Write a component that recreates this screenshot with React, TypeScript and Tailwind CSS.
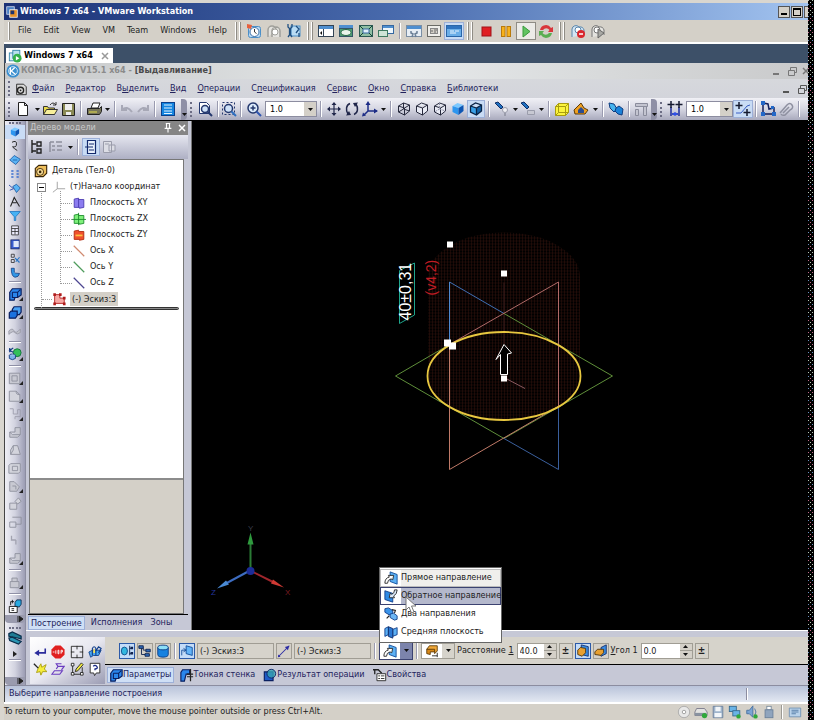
import type { ReactNode } from "react";
import { clsx } from "clsx";

const cubePath = "M2.5 5l5-3 6 2v6l-5 4-6-3z M2.5 5l6 2 5-3 M8.5 7v7";

// every glyph is drawn on a 16x16 grid
const icons: Record<string, ReactNode> = {
  // VMware
  vmware: (
    <>
      <rect x="1" y="1" width="10" height="10" fill="#4a7fc4" stroke="#dfe6f5" />
      <rect x="5" y="5" width="10" height="10" fill="#e8922a" stroke="#fff" />
      <rect x="6" y="6" width="5" height="5" fill="#1d3470" />
    </>
  ),
  vmTab: (
    <>
      <rect x="1.5" y="4.5" width="8" height="9" fill="#d8ecf8" stroke="#2d82a8" />
      <rect x="5.5" y="1.5" width="8" height="9" fill="#b9e0ee" stroke="#2d82a8" />
      <circle cx="10.5" cy="10.5" r="5" fill="#35b04a" />
      <path d="M9 8l4 2.5L9 13z" fill="#fff" />
    </>
  ),
  snapshot: (
    <>
      <rect x="2.5" y="3.5" width="12" height="11" rx="2" fill="#b8d8f2" stroke="#4b8fc8" />
      <circle cx="8.5" cy="9" r="4.5" fill="#fff" stroke="#3b6fa6" />
      <path d="M8.5 6v3l2 1.5" stroke="#333" fill="none" />
      <path d="M1 1l5 1-1 4-4-1z" fill="#e8603c" />
    </>
  ),
  revert: (
    <>
      <path d="M2 14V7a4 4 0 018 0M6 14V8a4 4 0 018 0v6" stroke="#9f9f9a" fill="#e4e3df" strokeWidth="1.5" />
      <circle cx="9" cy="9" r="3" fill="#fff" stroke="#9f9f9a" />
    </>
  ),
  manage: (
    <>
      <rect x="5" y="3" width="9" height="10" fill="#b8dcf4" stroke="#4b8fc8" />
      <path d="M2 1v3l1.500 1.500V12L2 14M6 1v3L4.500 5.500V12L6 14M10 3l3 3-3 4M13 10v4" stroke="#1f4f80" fill="none" strokeWidth="1.300" />
    </>
  ),
  sidebar: (
    <>
      <rect x=".5" y="2.500" width="15" height="11" fill="#fff" stroke="#345" />
      <path d="M1 3h14v3H1z" fill="#4f8fd0" />
      <path d="M5.500 6v8" stroke="#345" />
      <path d="M4 8v4L2 10z" fill="#111" />
    </>
  ),
  switchView: (
    <>
      <rect x="1" y="2" width="14" height="3" fill="#4f8fd0" />
      <rect x="1.500" y="5.500" width="13" height="8" fill="#4d9a72" stroke="#356" />
      <ellipse cx="8" cy="9.500" rx="5" ry="3" fill="#e9f5ea" stroke="#2a6a48" />
    </>
  ),
  fullScreen: (
    <>
      <rect x="1.500" y="2.500" width="13" height="11" fill="#8fbfa4" stroke="#2b5a54" />
      <rect x="5" y="6" width="6" height="4" fill="#dff0fa" stroke="#3668a0" />
      <path d="M2 3l3 3M14 3l-3 3M2 13l3-3M14 13l-3-3" stroke="#143" />
    </>
  ),
  unity: (
    <>
      <rect x="4.500" y="2.500" width="11" height="8" fill="#eef6fb" stroke="#3668a0" />
      <path d="M5 3h10v2H5z" fill="#4f8fd0" />
      <rect x=".5" y="7.500" width="9" height="6" fill="#cfe4d6" stroke="#3f7a60" />
    </>
  ),
  appliance: (
    <>
      <rect x=".5" y="2.500" width="15" height="11" fill="#e7eef5" stroke="#7a8ea4" />
      <path d="M1 3h14v3H1z" fill="#4f8fd0" />
      <path d="M5 8v2l2 1-1 3M11 8v2L9 11l1 3" stroke="#6a7f96" fill="none" strokeWidth="1.500" />
    </>
  ),
  summary: (
    <>
      <rect x="1.500" y="2.500" width="13" height="11" fill="#efeeea" stroke="#6b6b66" />
      <rect x="4.500" y="5.500" width="7" height="5" fill="#d4d0c8" stroke="#888" />
      <path d="M6 7v2M8 7h3M8 9h2" stroke="#666" />
    </>
  ),
  console: (
    <>
      <rect x=".5" y="2.500" width="15" height="11" fill="#6aaee8" stroke="#2a66a8" />
      <path d="M1 3h14v3H1z" fill="#2f74c0" />
      <path d="M4 8h4M9 8h4M4 10h6" stroke="#e9f5ff" />
    </>
  ),
  powerOff: <rect x="4" y="4" width="9" height="9" fill="#e01f24" stroke="#a01318" />,
  suspend: (
    <>
      <rect x="3.500" y="3.500" width="3.500" height="10" fill="#f7b21c" stroke="#b97a0c" />
      <rect x="9" y="3.500" width="3.500" height="10" fill="#f7b21c" stroke="#b97a0c" />
    </>
  ),
  powerOn: <path d="M5 3l7 5.500L5 14z" fill="#62c462" stroke="#3a9a3c" />,
  reset: (
    <>
      <path d="M2 7a6 6 0 0111-2l2-1v5h-5l1.500-2A4 4 0 005 7z" fill="#d9363a" />
      <path d="M14 10a6 6 0 01-11 2l-2 1V8h5l-1.500 2A4 4 0 0011 10z" fill="#5aae52" />
    </>
  ),
  snapStop: (
    <>
      <path d="M2 14V6a4 4 0 017-2 4 4 0 015 3v5" fill="#d4e6f4" stroke="#5a86ac" />
      <circle cx="8" cy="7" r="3" fill="#fff" stroke="#5a86ac" />
      <circle cx="11" cy="11" r="4" fill="#d9262c" />
      <path d="M9 11h4" stroke="#fff" strokeWidth="1.500" />
    </>
  ),
  snapPlay: (
    <>
      <path d="M2 14V6a4 4 0 017-2 4 4 0 015 3v5" fill="#e4e3df" stroke="#777" />
      <circle cx="7" cy="7" r="3" fill="#fff" stroke="#777" />
      <path d="M8 6l6 4-6 5z" fill="#a8a8a4" stroke="#666" />
    </>
  ),
  disc: (
    <>
      <circle cx="8" cy="8" r="6.500" fill="#e8e8e8" stroke="#a8a8a8" />
      <circle cx="8" cy="8" r="2" fill="#fff" stroke="#999" />
    </>
  ),
  drive: (
    <>
      <path d="M3 4h9l3 4v4H1V8z" fill="#e2e2e0" stroke="#778" />
      <path d="M1 9h13v3H1z" fill="#8892a0" />
      <circle cx="12" cy="12" r="3" fill="#2fa83a" />
    </>
  ),
  floppy: (
    <>
      <path d="M2.500 1.500h11v13h-11z" fill="#9fb4cc" stroke="#6a7f9a" />
      <path d="M5 2h6v5H5zM4 9h8v5H4z" fill="#f2f5f8" />
    </>
  ),
  network: (
    <>
      <rect x="1.500" y="1.500" width="8" height="6" fill="#69b3e6" stroke="#34688f" />
      <rect x="5.500" y="6.500" width="8" height="6" fill="#69b3e6" stroke="#34688f" />
      <circle cx="12" cy="13" r="2.500" fill="#2fa83a" />
    </>
  ),
  sound: (
    <>
      <path d="M2 6h3l4-5v13l-4-4H2z" fill="#7aa4d4" stroke="#466f9f" />
      <path d="M11 4q3 4 0 8" stroke="#466f9f" fill="none" />
      <circle cx="12" cy="13" r="2.500" fill="#2fa83a" />
    </>
  ),
  usb: (
    <>
      <rect x="5.500" y="1.500" width="5" height="4" fill="#fff" stroke="#789" />
      <rect x="3.500" y="5.500" width="9" height="9" fill="#8fa4bd" stroke="#6a7f9a" />
    </>
  ),
  log: (
    <>
      <path d="M1.500 3.500h13v10h-13z" fill="#b9d2ea" stroke="#6f90b2" />
      <path d="M4 6h8M4 8h8M4 10h5" stroke="#4f77a4" />
    </>
  ),

  // Kompas
  kompas: (
    <>
      <circle cx="8" cy="8" r="7.500" fill="#3b8fcf" />
      <circle cx="8" cy="8" r="5" fill="none" stroke="#d8ecf8" />
      <path d="M5 4v8M10 4L6 8l5 4" stroke="#fff" fill="none" strokeWidth="1.500" />
    </>
  ),
  partDoc: (
    <>
      <path d="M3 2.500h8l3 3v9H3z" fill="#d8d8d8" stroke="#222" />
      <circle cx="7.500" cy="9.500" r="3.500" fill="none" stroke="#222" strokeWidth="1.500" />
      <circle cx="7.500" cy="9.500" r="1" fill="#222" />
    </>
  ),
  new: <path d="M3.500 1.500h6l3 3v10h-9z M9.500 1.500v3h3" fill="#fff" stroke="#222" />,
  open: (
    <>
      <path d="M1.500 13.500v-8h4l1 1.500h6v6.500z" fill="#e8d84a" stroke="#333" />
      <path d="M1.500 13.500l3-5h11l-3 5z" fill="#f7ef9a" stroke="#333" />
      <path d="M8 4q3-4 6 0M14 1v3h-3" stroke="#333" fill="none" />
    </>
  ),
  save: (
    <>
      <path d="M2.500 2.500h12v12h-12z" fill="#8a8a55" stroke="#222" />
      <path d="M5 3h7v6H5zM6 11h5v3H6z" fill="#eee" />
    </>
  ),
  print: (
    <>
      <path d="M5 7l2-5h7l-2 5z" fill="#fff" stroke="#222" />
      <path d="M1.500 7.500h12l2-2v5l-2 3h-12z" fill="#77755a" stroke="#222" />
      <path d="M3 11h8" stroke="#e7e04a" />
    </>
  ),
  undo: <path d="M3 4v5h5M3 9q5-5 10 2" fill="none" stroke="#a7a8b6" strokeWidth="2" />,
  redo: <path d="M13 4v5H8M13 9Q8 4 3 11" fill="none" stroke="#a7a8b6" strokeWidth="2" />,
  manager: (
    <>
      <rect x="1.500" y="1.500" width="13" height="13" fill="#1686e0" stroke="#0a3f8c" />
      <path d="M4 4h8M4 7h8M4 10h8M4 12.500h8" stroke="#e2f3ff" />
    </>
  ),
  zoomPage: (
    <>
      <path d="M2.500 1.500h7l3 3v8h-10z" fill="#fff" stroke="#24386e" />
      <circle cx="8" cy="8" r="3.500" fill="#cfe2f8" stroke="#24386e" strokeWidth="1.500" />
      <path d="M10.500 10.500L15 15" stroke="#24386e" strokeWidth="2" />
    </>
  ),
  zoomWindow: (
    <>
      <path d="M1.500 1.500h12v12h-12z" fill="none" stroke="#24386e" strokeDasharray="2 2" />
      <circle cx="7.500" cy="7.500" r="4" fill="#cfe2f8" stroke="#24386e" strokeWidth="1.500" />
      <path d="M10.500 10.500L15 15" stroke="#2f6fc0" strokeWidth="2" />
    </>
  ),
  zoomIn: (
    <>
      <circle cx="7" cy="7" r="5" fill="#dcebfb" stroke="#24386e" strokeWidth="1.500" />
      <path d="M4.500 7h5M7 4.500v5" stroke="#24386e" strokeWidth="1.500" />
      <path d="M10.500 10.500L15 15" stroke="#2f56b0" strokeWidth="2" />
    </>
  ),
  pan: (
    <>
      <path d="M8 2v12M2 8h12" stroke="#20264a" strokeWidth="1.200" />
      <path d="M8 1l2.500 3h-5zM8 15l2.500-3h-5zM1 8l3-2.500v5zM15 8l-3-2.500v5z" fill="#20264a" />
    </>
  ),
  rotate: (
    <>
      <path d="M6 2.500C2 4 1.500 9 4 13M10 13.500C14 12 14.500 7 12 3" fill="none" stroke="#20264a" strokeWidth="1.500" />
      <path d="M2 14.500l5-.500-2-4zM14 1.500L9 2l2 4z" fill="#20264a" />
    </>
  ),
  orient: (
    <>
      <path d="M6 2v8h9M6 10l-4 4" fill="none" stroke="#1c2c86" strokeWidth="1.500" />
      <path d="M6 0l2.500 4h-5zM16 10l-4-2.500v5zM0 15.500l1-4 3 3z" fill="#1c2c86" />
    </>
  ),
  wire: (
    <>
      <path d={cubePath} fill="none" stroke="#26293c" />
      <path d="M7.500 2v6l-5 3M7.500 8l6 2" stroke="#26293c" fill="none" />
    </>
  ),
  hidden: <path d={cubePath} fill="#e9ebf5" stroke="#26293c" />,
  hiddenThin: (
    <>
      <path d={cubePath} fill="#e9ebf5" stroke="#26293c" />
      <path d="M7.500 2v6l-5 3M7.500 8l6 2" stroke="#8d90a6" fill="none" strokeDasharray="2 1" />
    </>
  ),
  shaded: (
    <>
      <path d="M2.500 5l5-3 6 2-5 3z" fill="#7cc8ff" />
      <path d="M2.500 5l6 2v7l-6-3z" fill="#2d96f0" />
      <path d="M8.500 7l5-3v6l-5 4z" fill="#0d56b4" />
    </>
  ),
  shadedEdges: (
    <>
      <path d="M2.500 5l6 2v7l-6-3z" fill="#39a0e8" />
      <path d="M8.500 7l5-3v6l-5 4z" fill="#1262a8" />
      <path d={cubePath} fill="none" stroke="#0a2346" strokeWidth="1.300" />
    </>
  ),
  section: (
    <>
      <path d="M1 2l3-1 5 5-2 2z" fill="#1f6fc0" stroke="#0e2d66" />
      <circle cx="11" cy="9" r="2.500" fill="#f0f0f4" stroke="#9a9cab" />
      <path d="M11 12v3" stroke="#9a9cab" strokeWidth="2" />
    </>
  ),
  brush: (
    <>
      <path d="M1 2l3-1 5 5-2 2z" fill="#1f6fc0" stroke="#0e2d66" />
      <path d="M7.500 9.500h7v4h-7z" fill="#c7c8d2" stroke="#9a9cab" />
    </>
  ),
  yellowCube: (
    <>
      <path d="M1.500 5.500l3-3h10v9l-3 3h-10z" fill="#fbf43c" stroke="#a89c10" />
      <path d="M1.500 5.500h10v9M11.500 5.500l3-3M4.500 2.500v9h10M4.500 11.500l-3 3" fill="none" stroke="#a89c10" />
    </>
  ),
  house: (
    <>
      <path d="M1 9l7-7 3 5 4 2-3 4H2z" fill="#f0a020" stroke="#5c3a08" />
      <path d="M5 9l3-3 3 3v3H5z" fill="#2b4c90" />
    </>
  ),
  butterfly: (
    <>
      <path d="M1 2l5 1 3 5-3 3-4-4z" fill="#46b4ee" stroke="#0f3c80" />
      <path d="M8 7l3-2 4 3-1 6-4-1-3-3z" fill="#1b82d8" stroke="#0f3c80" />
    </>
  ),
  panelGrey: <path d="M2.500 2.500h12v3h-12zM2.500 8.500h3v6h-3zM10.500 5.500h3v9h-3z" fill="#c3c4d0" stroke="#8a8c9c" />,
  snapPoints: (
    <>
      <path d="M4 6v9M12 6v9M5 13h6" stroke="#1c2c9c" fill="none" strokeWidth="1.500" />
      <path d="M4 0v7M.5 3.500h7M12 0v7M8.500 3.500h7" stroke="#151a30" strokeWidth="1.500" />
      <path d="M5 13l3-2v4zM11 13l-3-2v4z" fill="#2f50e8" />
    </>
  ),
  snaps: (
    <>
      <path d="M4 1v7M.5 4.500h7M12 8v7M8.500 11.500h7" stroke="#151a30" strokeWidth="1.500" />
      <path d="M1 12h5l6-7 3-1" stroke="#3a5fc4" fill="none" />
    </>
  ),
  localCs: (
    <>
      <path d="M3 2v11h11V7l-5 1-1-5z" fill="none" stroke="#13205c" strokeWidth="1.500" />
      <path d="M1 0h4v4H1zM1 11h4v4H1zM12 11h4v4h-4zM11 5h3v3h-3z" fill="#2368c8" />
    </>
  ),
  clip: <path d="M2 12L9 4q3-3 5 0t-2 5l-5 5q-3 1-4-1M5 12l6-6" fill="none" stroke="#8e90a0" strokeWidth="1.500" />,

  // left strip
  sketch: <path d="M4 3q6-3 6 2t-4 4 5 5" fill="none" stroke="#222" strokeWidth="1.300" />,
  planeBlue: <path d="M1 8l6-6 8 5-6 7z M5 8l6 0" fill="#5bb4f4" stroke="#12509c" />,
  dots: <path d="M3 4h3M10 4h3M3 8h3M10 8h3M3 12h3M10 12h3" stroke="#3a6fd0" strokeWidth="2" />,
  surf: (
    <>
      <path d="M5 6l5-3 5 5-5 6z" fill="#5bb4f4" stroke="#12509c" />
      <path d="M0 4l6 5-5 2" fill="none" stroke="#12309c" />
    </>
  ),
  dim: <path d="M2 14L7 2l7 12M5 9h5" fill="none" stroke="#222" strokeWidth="1.400" />,
  filter: <path d="M1 2h14L9 9v5H7V9z" fill="#45b2f4" stroke="#1b70bc" />,
  sheet: <path d="M3.500 2.500h9v12h-9z M3.500 6h9M3.500 10h9M8 6v8" fill="#eef" stroke="#222" />,
  report: (
    <>
      <rect x="2.500" y="2.500" width="11" height="12" fill="#3a5fd0" stroke="#12205c" />
      <path d="M6 4h7v8H6z" fill="#dfe8fa" />
    </>
  ),
  measure: (
    <>
      <path d="M3 3h4v4H3zM3 10h4v4H3z" fill="none" stroke="#222" />
      <path d="M8 8l6 6M14 7l-5 6" stroke="#2b76c4" strokeWidth="1.500" />
    </>
  ),
  elbow: <path d="M3 3h4v5q0 2 7 2-1 5-6 5-5-1-5-12z" fill="#3296e4" stroke="#0e3880" />,
  extrude: (
    <>
      <path d="M2 6l3-4h10v7l-4 3H8l-1 3H2z" fill="#2a86ec" stroke="#0a1f60" strokeWidth="1.400" />
      <path d="M5 6h6l3-3M11 6v6M5 6v6h3" fill="none" stroke="#0a1f60" strokeWidth="1.200" />
    </>
  ),
  extrude2: (
    <>
      <path d="M5 5l2-3h8v6l-2 3H5z" fill="#4aa2f4" stroke="#0a1f60" strokeWidth="1.400" />
      <path d="M1.500 9l2-2h7v5l-2 3h-7z" fill="#1b72e0" stroke="#0a1f60" strokeWidth="1.400" />
    </>
  ),
  greyA: <path d="M1 9q4-4 6 0t7-2v4q-4 3-6 0t-7 2z" fill="#c2c3cc" stroke="#9899a6" />,
  greenGear: (
    <>
      <circle cx="10.500" cy="6.500" r="4.500" fill="#33c05a" stroke="#14703a" />
      <path d="M2 1v5M6 1L2 4l4 2" fill="none" stroke="#123a80" strokeWidth="1.400" />
      <ellipse cx="5" cy="9.500" rx="3.500" ry="1.500" fill="#cfe4f8" stroke="#123a80" />
      <path d="M1.500 9.500V13q3.500 3 7 0V9.500" fill="#7fb2e8" stroke="#123a80" />
    </>
  ),
  greyB: <path d="M1.500 2.500h12v12h-12z M4.500 5.500h6v6h-6z" fill="#c8c9d2" stroke="#8d8f9c" />,
  greyC: <path d="M1.500 14V2.500h8l4 4V14z M9.500 2.500q-1 4 4 4" fill="#d3d4dc" stroke="#8d8f9c" />,
  greyD: <path d="M2 2h4v6h5V3h3v8H8v3" fill="none" stroke="#9c9dab" />,
  greyE: <path d="M2 8h6V3h6v8l-3 3H2z M2 8l3 3h9" fill="#c8c9d2" stroke="#8d8f9c" />,
  greyF: <path d="M3 13V8l3-5h5l3 10z M6 3v5l-3 5" fill="#d3d4dc" stroke="#8d8f9c" />,
  greyG: <path d="M3 3h11v9l-2 2H1V5z M5 6h6v5H5z" fill="#d3d4dc" stroke="#8d8f9c" />,
  greyH: <path d="M2 3h5l6 6-3 5H2z M5 8h4v4" fill="#c8c9d2" stroke="#8d8f9c" />,
  greyI: <path d="M2 7h8v7H2z M8 5l4-4 3 4-4 3z" fill="#d3d4dc" stroke="#8d8f9c" />,
  greyJ: <path d="M2 8h7v6H2z M5 2.500h10v8h-6" fill="none" stroke="#8d8f9c" />,
  greyK: <path d="M4 3v5h5M9 8v5" fill="none" stroke="#a2a3b0" strokeWidth="1.500" />,
  lock: <path d="M2.500 7.500h10v7h-10z M4.500 7V3.500h6V7" fill="#c8c9d2" stroke="#8d8f9c" />,
  assembly: (
    <>
      <path d="M8 4l2-3h5v5l-2 3H8z" fill="#2aaae0" stroke="#0c2a50" />
      <path d="M1.500 8.500h9v7h-9zM4 11h3M4 13h3" fill="#fff" stroke="#111" />
      <path d="M3 7V3h4M5 1v4" fill="none" stroke="#111" />
    </>
  ),
  bolts: (
    <>
      <path d="M1 3l4-2 10 5v3L11 8 1 6z" fill="#1f7c94" stroke="#0b2f4c" strokeWidth="1.400" />
      <path d="M1 8l4-1 10 5-3 3L2 11z" fill="#2a96b4" stroke="#0b2f4c" strokeWidth="1.400" />
    </>
  ),

  // tree
  part: (
    <>
      <path d="M1.500 5l4-3.500h9v9l-4 4h-9z" fill="#eebf5c" stroke="#3a2608" strokeWidth="1.300" />
      <circle cx="7" cy="9" r="4" fill="#f8dd98" stroke="#3a2608" />
      <circle cx="7" cy="9" r="1.500" fill="#3a2608" />
    </>
  ),
  origin: <path d="M6 2v8h9M6 10l-5 4" stroke="#9a9a9a" fill="none" />,
  planeXY: <path d="M2.500 3.500l5-1v1.500h6v9l-5 1V13h-6z M7.500 3v10" fill="#8c7cf0" stroke="#4a3cb0" />,
  planeZX: (
    <>
      <path d="M2.500 3.500l5-1v1.500h6v9l-5 1V13h-6z" fill="#7ef07a" stroke="#1c8c2c" />
      <path d="M0 8.500h16M7.500 1v14" stroke="#1c8c2c" />
    </>
  ),
  planeZY: (
    <>
      <path d="M2.500 3.500l5-1v1.500h6v9l-5 1V13h-6z" fill="#f0502c" stroke="#b02c10" />
      <path d="M4 8.500h8" stroke="#ffc040" strokeWidth="2" />
    </>
  ),
  axisX: <path d="M2 2l12 12" stroke="#d08a70" strokeWidth="1.400" />,
  axisY: <path d="M2 2l12 12" stroke="#4f9c5c" strokeWidth="1.400" />,
  axisZ: <path d="M2 2l12 12" stroke="#4c4690" strokeWidth="1.400" />,
  sketchRed: (
    <>
      <path d="M3 3v10h11V7h-5V3z" fill="#f7a8a4" stroke="#b01c1c" />
      <path d="M1.500 1.500h3v3h-3zM8 1.500h3v3H8zM12.500 5.500h3v3h-3zM1.500 12h3v3h-3zM12.500 12h3v3h-3z" fill="#b01c1c" />
    </>
  ),
  treeList: <path d="M3 1v13M3 5h4M3 12h4M8 3h4v4H8zM8 10h4v4H8z" fill="none" stroke="#222" strokeWidth="1.400" />,
  treeGrey: <path d="M2 3h4M4 7h3M4 11h3M8 3h6M9 7h5M9 11h5M2 3v10" stroke="#8d8f9c" strokeWidth="1.500" />,
  docNode: <path d="M4.500 1.500h8v13h-8z M6 5h5M6 11h5M2 8h8" fill="#e9f1fc" stroke="#13296c" strokeWidth="1.200" />,
  docGrey: <path d="M2.500 2.500h8v11h-8z M8 6h6v6H8z M4 5h4" fill="#dcdde5" stroke="#9a9cab" />,
  pin: <path d="M5 2h6M6 2v6M10 2v6M3.500 8.500h9M8 9v5" stroke="#fff" strokeWidth="1.500" fill="none" />,

  // property bar
  enter: (
    <>
      <path d="M14 4v5H6" fill="none" stroke="#2b2c9c" strokeWidth="1.800" />
      <path d="M7 5.500L1.500 9 7 12.500z" fill="#2b2c9c" />
    </>
  ),
  stop: (
    <>
      <path d="M5 .5h6l4.500 4.500v6L11 15.500H5L.5 11V5z" fill="#e02020" />
      <path d="M2 8h2M5.500 6v4M8 6h1v4H8zM11.500 10V6h1.500v2h-1.500" stroke="#fff" fill="none" />
    </>
  ),
  frame: <path d="M1.500 1.500h13v13h-13z M1 8h4M11 8h4M8 1v4M8 11v4" fill="none" stroke="#222" />,
  paramsBlue: (
    <>
      <path d="M1 8l4-2h10l-3 6H6l-3 2z" fill="#4aa8f0" stroke="#13408c" />
      <path d="M5 12V4q2-4 4 0v8M9 7l3-5 3 2-3 5" fill="none" stroke="#13408c" strokeWidth="1.300" />
      <path d="M6 5h2v4H6z" fill="#f8e050" />
    </>
  ),
  wand: (
    <>
      <path d="M6 7l3-5 1 4 5-3-2 5 3 3-5 0-2 4-1-4-4 1z" fill="#f6ee3c" stroke="#a89c10" />
      <path d="M1 2l5 5" stroke="#222" strokeWidth="1.500" />
    </>
  ),
  path: <path d="M1 14l3-4h9l-3 4zM6 8l2-3h7l-3 4M8 5l-2-3h6" fill="none" stroke="#6a3cc0" strokeWidth="1.300" />,
  remember: (
    <>
      <path d="M3 4v10h11V6" fill="none" stroke="#222" />
      <path d="M1.500 1.500h3v3h-3zM1.500 12h3v3h-3zM12 12h3v3h-3z" fill="#fff" stroke="#222" />
      <path d="M6 11l1-3 6-7 2 2-6 7z" fill="#f0e840" stroke="#222" />
    </>
  ),
  help: (
    <>
      <path d="M2.500 1.500h11v11h-4l-2 3-1-3h-4z" fill="#fff" stroke="#222" />
      <path d="M6 5q2-2.500 4 0t-2 3v1.500" stroke="#1c2c86" fill="none" strokeWidth="1.500" />
    </>
  ),
  objTree: (
    <>
      <ellipse cx="5" cy="8" rx="3.500" ry="4.500" fill="#34b8e0" stroke="#0c4a88" />
      <path d="M11 2v11M11 5h2M11 11h2" stroke="#10234e" fill="none" />
      <path d="M12 3h3v3h-3zM12 9h3v3h-3z" fill="#10234e" />
    </>
  ),
  chain: (
    <>
      <path d="M4 4v8h5M6 4v3h4" fill="none" stroke="#10234e" />
      <path d="M1 2h5v3H1zM9 6h5v3H9zM8 11h5v3H8z" fill="#2f6ab8" stroke="#10234e" />
    </>
  ),
  cylinder: (
    <>
      <path d="M2 4v8q0 3 6 3t6-3V4z" fill="#1682e0" stroke="#0a3a84" />
      <ellipse cx="8" cy="4" rx="6" ry="2.700" fill="#8ce0f8" stroke="#0a3a84" />
    </>
  ),
  face: (
    <>
      <path d="M7 2l7 2v9l-7-2z" fill="#62b4f8" stroke="#0e4a98" />
      <path d="M2 13V7h4M4 5l3 2-3 2" fill="none" stroke="#0e4a98" />
    </>
  ),
  line: (
    <>
      <path d="M2 14L14 2" stroke="#2c2ca4" strokeWidth="1.200" />
      <path d="M14 2l-1.500 5-3.500-3.500zM1 15l.5-3 2.500 2.500z" fill="#2c2ca4" />
    </>
  ),
  dirForward: (
    <>
      <path d="M7 1l8 3v11l-8-3z" fill="#5cb0f4" stroke="#0e4a98" />
      <path d="M1 14q0-6 5-7L5 5h6l-1 5-2-1q-4 1-4 5z" fill="#fff" stroke="#222" />
    </>
  ),
  dirBack: (
    <>
      <path d="M1 2l9 3v10l-9-3z" fill="#2f8ae4" stroke="#0e3a88" />
      <path d="M15 1q0 5-4 7l1 2H6l1-5 2 1q3-1 3-5z" fill="#dceafa" stroke="#222" />
    </>
  ),
  dirBoth: (
    <>
      <path d="M1 2l4-1 5 3v4L6 9 1 6z" fill="#3a94ea" stroke="#0e3a88" />
      <path d="M7 8l4-1 4 3v4l-3 1-5-3z" fill="#6cb6f4" stroke="#0e3a88" />
      <path d="M3 13l3-3M9 3l4 1-1 3" stroke="#222" fill="none" strokeWidth="1.300" />
    </>
  ),
  dirMid: (
    <>
      <path d="M1 4l4-2v9l-4 2zM10 5l5-2v8l-5 2z" fill="#5cb0f4" stroke="#0e3a88" />
      <path d="M5 2l5 2v11l-5-2z" fill="#2a78d4" stroke="#0e2a68" />
    </>
  ),
  distance: (
    <>
      <path d="M2 6l3-4h9v6l-3 3V8z" fill="#f0a838" stroke="#5c3a08" />
      <path d="M2 6h9v3H6v3l-4-1z" fill="#d88818" stroke="#5c3a08" />
      <path d="M8 13.500h6M14 10v5" stroke="#222" fill="none" />
    </>
  ),
  slopeA: (
    <>
      <path d="M6 1l8 2v11l-8-2z" fill="#3a8ee8" stroke="#0e2a68" />
      <path d="M2 7l3-3 6 1v5l-4 4-5-2z" fill="#e8a030" stroke="#4a3008" />
    </>
  ),
  slopeB: (
    <>
      <path d="M8 4l6-3v10l-6 3z" fill="#3a8ee8" stroke="#0e2a68" />
      <path d="M1 9l3-3 7 0v4l-3 3-7-1z" fill="#e8a030" stroke="#4a3008" />
    </>
  ),
  thin: (
    <>
      <path d="M1 5l2-3h8v5H7l-2 8H1z" fill="#2a86ec" stroke="#0a1f60" strokeWidth="1.300" />
      <path d="M12 1v14M8 7h7M8 10h7" stroke="#222" strokeWidth="1.400" />
    </>
  ),
  boolean: (
    <>
      <path d="M1.500 4.500h10v10h-10z" fill="#1f5cc8" stroke="#0a1f60" strokeWidth="1.300" />
      <circle cx="9.500" cy="6.500" r="5" fill="#36a4b4" fillOpacity=".8" stroke="#0a1f60" />
    </>
  ),
  props: (
    <>
      <path d="M0 2h6l4 4M2 2v5" stroke="#222" fill="none" strokeWidth="1.500" />
      <path d="M4.500 6.500h10v8h-10z M6 9h2M9 9h4M6 12h2M9 12h4" fill="#fff" stroke="#222" />
    </>
  ),
};

function Icon({ name, className = "size-4" }: { name: string; className?: string }) {
  return (
    <svg viewBox="0 0 16 16" className={clsx("shrink-0", className)} aria-hidden>
      {icons[name]}
    </svg>
  );
}

function Caret() {
  return (
    <svg viewBox="0 0 5 3" className="h-[3px] w-[5px] shrink-0" aria-hidden>
      <path d="M0 0h5L2.500 3z" fill="#111" />
    </svg>
  );
}

function Tool({
  icon,
  width = "w-[18px]",
  pressed,
  className,
}: {
  icon: string;
  width?: string;
  pressed?: boolean;
  className?: string;
}) {
  return (
    <button
      aria-label={icon}
      className={clsx(
        "flex h-[18px] shrink-0 items-center justify-center",
        width,
        pressed && "border border-[#9db0d8] bg-[#c9dcf5]",
        className
      )}
    >
      <Icon name={icon} />
    </button>
  );
}

function DropArrow() {
  return (
    <button aria-label="more" className="flex h-4 w-2 shrink-0 items-center justify-center">
      <Caret />
    </button>
  );
}

function Sep({ width = "w-2" }: { width?: string }) {
  return (
    <span className={clsx("flex shrink-0 justify-center", width)}>
      <span className="h-4 w-0.5 border-l border-[#9a9bb0] bg-white" />
    </span>
  );
}

function Grip() {
  return (
    <span className="flex w-2 shrink-0 justify-center">
      <span className="h-[15px] border-l-2 border-dotted border-[#6c6d84]" />
    </span>
  );
}

function Overflow({ className }: { className?: string }) {
  return (
    <span className={clsx("flex h-[21px] w-1.5 shrink-0 items-end justify-center rounded-r bg-[#8f90a6] pb-1", className)}>
      <Caret />
    </span>
  );
}

// heavier double separator of the VMware toolbar
function VmGrip() {
  return (
    <span className="flex w-3 shrink-0 justify-center gap-0.5">
      <span className="h-[18px] w-0.5 border-r border-[#8f8c85] bg-white" />
      <span className="h-[18px] w-0.5 border-r border-[#8f8c85] bg-white" />
    </span>
  );
}

function Mnemonic({ text, at = 0 }: { text: string; at?: number }) {
  return (
    <>
      {text.slice(0, at)}
      <u>{text[at]}</u>
      {text.slice(at + 1)}
    </>
  );
}

function Combo({ label, value, className }: { label: string; value: string; className?: string }) {
  return (
    <span className={clsx("relative flex h-4 shrink-0 border border-[#8c8da0] bg-white", className)}>
      <select aria-label={label} className="w-full appearance-none pl-1 text-[9px] leading-3 outline-none">
        <option>{value}</option>
      </select>
      <span className="pointer-events-none absolute inset-y-0 right-0 flex w-3 items-center justify-center bg-[#d4d0c8]">
        <Caret />
      </span>
    </span>
  );
}

function VmTitleBar() {
  return (
    <header className="mt-[3px] flex h-[17px] items-center bg-linear-to-r from-[#1b3176] via-[#4a6cae] to-[#a3c4f0] pl-0.5 text-white">
      <Icon name="vmware" className="size-3" />
      <h1 className="ml-0.5 text-[9px] font-bold">Windows 7 x64 - VMware Workstation</h1>
      <div className="ml-auto flex gap-px">
        <button aria-label="Minimize" className="flex h-3 w-3 items-end border border-[#555] bg-[#d4d0c8] px-0.5 pb-0.5">
          <span className="h-0.5 w-1.5 bg-black" />
        </button>
        <button aria-label="Maximize" className="flex h-3 w-3 items-center justify-center border border-[#555] bg-[#d4d0c8]">
          <span className="size-2 border border-t-2 border-black" />
        </button>
        <button aria-label="Close" className="h-3 w-1 border border-r-0 border-[#555] bg-[#d4d0c8]" />
      </div>
    </header>
  );
}

function VmToolbar() {
  return (
    <div className="flex h-6 items-center border-b-2 border-white bg-[#d4d0c8] text-[9px] text-[#222]">
      <span className="ml-1 h-[18px] w-0.5 border-r border-[#8f8c85] bg-white" />
      <nav className="ml-2 flex w-[214px] gap-3">
        {["File", "Edit", "View", "VM", "Team", "Windows", "Help"].map((m) => (
          <button key={m}>{m}</button>
        ))}
      </nav>
      <VmGrip />
      <Tool icon="snapshot" width="w-5" />
      <Tool icon="revert" width="w-5" />
      <Tool icon="manage" width="w-5" />
      <VmGrip />
      <Tool icon="sidebar" width="w-5" />
      <Tool icon="switchView" width="w-5" />
      <Tool icon="fullScreen" width="w-5" />
      <Tool icon="unity" width="w-5" />
      <Sep />
      <Tool icon="appliance" width="w-5" />
      <Tool icon="summary" width="w-5" />
      <Tool icon="console" width="w-5" pressed />
      <VmGrip />
      <Tool icon="powerOff" width="w-5" />
      <Tool icon="suspend" width="w-5" />
      <Tool icon="powerOn" width="w-5" className="border border-[#8f8c85] bg-[#ecebe7]" />
      <Tool icon="reset" width="w-5" />
      <VmGrip />
      <Tool icon="snapStop" width="w-5" />
      <Tool icon="snapPlay" width="w-5" />
    </div>
  );
}

function VmTabs() {
  return (
    <div className="flex h-[19px] items-end bg-[#3d5068] pl-0.5">
      <div className="flex h-[15px] w-[107px] items-center bg-white pl-0.5">
        <Icon name="vmTab" className="size-3.5" />
        <span className="ml-0.5 text-[9px] font-bold">Windows 7 x64</span>
        <button aria-label="Close tab" className="mr-1 ml-auto">
          <svg viewBox="0 0 8 8" className="size-2">
            <path d="M1 1l6 6M7 1L1 7" stroke="#999" strokeWidth="1.500" />
          </svg>
        </button>
      </div>
    </div>
  );
}

function WindowButtons({ className }: { className?: string }) {
  return (
    <svg viewBox="0 0 36 12" className={clsx("h-3 w-9", className)} aria-hidden>
      <path d="M1 9h6" stroke="currentColor" strokeWidth="2" />
      <path d="M16.500 5.500h6v5h-6zM18.500 5V2.500h6v5H23" fill="none" stroke="currentColor" />
      <path d="M31 3l6 6M31 9l6-6" stroke="currentColor" strokeWidth="1.500" />
    </svg>
  );
}

const kompasMenu: [string, number][] = [
  ["Файл", 0],
  ["Редактор", 0],
  ["Выделить", 1],
  ["Вид", 0],
  ["Операции", 0],
  ["Спецификация", 1],
  ["Сервис", 1],
  ["Окно", 0],
  ["Справка", 0],
  ["Библиотеки", 0],
];

function KompasHeader() {
  return (
    <div className="bg-linear-to-b from-[#d9dbdd] to-[#cfd0da]">
      <div className="flex h-4 items-center overflow-hidden bg-linear-to-r from-[#c6c8c9] via-[#e6e9ea] to-[#c9cacb] pl-px text-[9px] font-bold">
        <Icon name="kompas" className="size-3.5" />
        <span className="ml-px whitespace-pre text-[#8b8b8b]">КОМПАС-3D V15.1 x64 - </span>
        <span className="text-[#4a4a4a]">[Выдавливание]</span>
        <WindowButtons className="ml-auto text-[#777]" />
      </div>
      <div className="flex h-[19px] items-center overflow-hidden text-[9px] text-[#23235c]">
        <Grip />
        <Icon name="partDoc" className="mr-1 ml-px size-3.5" />
        <nav className="flex gap-[11px]">
          {kompasMenu.map(([text, at]) => (
            <button key={text}>
              <Mnemonic text={text} at={at} />
            </button>
          ))}
        </nav>
        <WindowButtons className="-mr-2.5 ml-auto text-[#555]" />
      </div>
      <div className="flex h-[22px] items-center overflow-hidden bg-linear-to-b from-[#f1f1f6] via-[#d5d6e2] to-[#a9aabd]">
        <Grip />
        <Tool icon="new" width="w-5" />
        <DropArrow />
        <Tool icon="open" />
        <Tool icon="save" />
        <Sep />
        <Tool icon="print" />
        <DropArrow />
        <Sep />
        <Tool icon="undo" width="w-4" />
        <Tool icon="redo" width="w-4" />
        <Sep />
        <Tool icon="manager" />
        <Overflow className="ml-1" />
        <Grip />
        <Tool icon="zoomPage" width="w-5" />
        <Sep width="w-1.5" />
        <Tool icon="zoomWindow" width="w-4" />
        <Sep />
        <Tool icon="zoomIn" />
        <Combo label="Масштаб" value="1.0" className="ml-0.5 w-[52px]" />
        <Sep />
        <Tool icon="pan" />
        <Tool icon="rotate" />
        <Tool icon="orient" />
        <DropArrow />
        <Sep />
        <Tool icon="wire" />
        <Tool icon="hidden" />
        <Tool icon="hiddenThin" />
        <Tool icon="shaded" />
        <Tool icon="shadedEdges" pressed />
        <Sep />
        <Tool icon="section" />
        <DropArrow />
        <Tool icon="brush" />
        <DropArrow />
        <Sep />
        <Tool icon="yellowCube" />
        <Tool icon="house" width="w-5" />
        <DropArrow />
        <Sep />
        <Tool icon="butterfly" />
        <Sep />
        <Tool icon="panelGrey" width="w-4" />
        <Overflow className="ml-0.5" />
        <Grip />
        <Tool icon="snapPoints" width="w-5" />
        <Combo label="Шаг курсора" value="1.0" className="ml-px w-[47px]" />
        <Tool icon="snaps" width="w-5" pressed />
        <Sep width="w-1.5" />
        <Tool icon="localCs" />
        <Tool icon="clip" />
        <Sep />
      </div>
    </div>
  );
}

function StripTool({ icon, corner, small }: { icon: string; corner?: boolean; small?: boolean }) {
  return (
    <button
      aria-label={icon}
      className={clsx("relative flex w-full shrink-0 items-center justify-center", small ? "h-3.5" : "h-[18px]")}
    >
      <Icon name={icon} className={small ? "size-3" : "size-3.5"} />
      {corner && (
        <svg viewBox="0 0 4 4" className="absolute right-0.5 bottom-0.5 size-1" aria-hidden>
          <path d="M4 0v4H0z" fill="#222" />
        </svg>
      )}
    </button>
  );
}

function StripSep() {
  return <span className="mx-auto my-0.5 h-0.5 w-3 shrink-0 border-t border-[#8f90a6] bg-white" />;
}

function StripHandle() {
  return (
    <span className="flex h-2 w-full shrink-0 items-center justify-end gap-px rounded-b bg-[#9a9bae] pr-0.5">
      <svg viewBox="0 0 6 6" className="size-1.5" aria-hidden>
        <path d="M0 0v6M2 0l4 3-4 3z" stroke="#222" fill="#222" />
      </svg>
    </span>
  );
}

const stripTop = ["sketch", "planeBlue", "dots", "surf", "dim", "filter", "sheet", "report", "measure", "elbow"];

function LeftStrip() {
  return (
    <aside className="flex w-5 shrink-0 flex-col items-center overflow-hidden bg-linear-to-r from-[#efeff5] via-[#d2d3e0] to-[#9c9db4]">
      <span className="my-px w-3 shrink-0 border-t-2 border-dotted border-[#6c6d84]" />
      <span className="w-full bg-[#c9dcf5]">
        <StripTool icon="shaded" small />
      </span>
      {stripTop.map((i) => (
        <StripTool key={i} icon={i} small />
      ))}
      <StripSep />
      <StripTool icon="extrude" corner />
      <StripTool icon="extrude2" corner />
      <StripTool icon="greyA" />
      <StripSep />
      <StripTool icon="greenGear" corner />
      <StripSep />
      <StripTool icon="greyB" corner />
      <StripTool icon="greyC" corner />
      <StripTool icon="greyD" corner />
      <StripTool icon="greyE" />
      <StripTool icon="greyF" />
      <StripTool icon="greyG" />
      <StripTool icon="greyH" corner />
      <StripTool icon="greyI" />
      <StripTool icon="greyJ" />
      <StripTool icon="greyK" />
      <StripTool icon="greyE" corner />
      <StripSep />
      <StripTool icon="lock" corner />
      <StripSep />
      <StripTool icon="assembly" />
      <StripHandle />
      <span className="mt-1 w-3 shrink-0 border-t-2 border-dotted border-[#6c6d84]" />
      <StripTool icon="bolts" />
      <svg viewBox="0 0 4 6" className="mt-1 h-1.5 w-1 shrink-0" aria-hidden>
        <path d="M0 0l4 3-4 3z" fill="#222" />
      </svg>
      <StripSep />
      <span className="mt-auto w-full">
        <StripHandle />
      </span>
    </aside>
  );
}

function TreeLeaf({ icon, label }: { icon: string; label: string }) {
  return (
    <li className="flex h-4 items-center">
      <span className="ml-[26px] w-3 border-t border-dotted border-[#999]" />
      <Icon name={icon} className="size-3.5" />
      <span className="ml-1">{label}</span>
    </li>
  );
}

function ModelTree() {
  return (
    <section className="flex w-[162px] shrink-0 flex-col bg-[#c6c8d6] pl-0.5">
      <div className="flex h-3.5 items-center bg-[#858585] px-0.5 text-[9px] text-[#c9c9c9]">
        <h2>Дерево модели</h2>
        <button aria-label="Закрепить" className="ml-auto">
          <Icon name="pin" className="size-3" />
        </button>
        <button aria-label="Закрыть" className="ml-1">
          <svg viewBox="0 0 8 8" className="size-2">
            <path d="M1 1l6 6M7 1L1 7" stroke="#fff" strokeWidth="1.500" />
          </svg>
        </button>
      </div>
      <div className="flex h-6 items-center bg-linear-to-b from-[#e6e7f0] to-[#aeb0c4]">
        <Tool icon="treeList" />
        <Tool icon="treeGrey" width="w-5" />
        <DropArrow />
        <Sep />
        <Tool icon="docNode" pressed />
        <Tool icon="docGrey" />
      </div>
      <div className="mr-1 ml-px flex min-h-0 flex-1 flex-col border border-[#777]">
        <div className="min-h-0 flex-1 bg-white pt-0.5 pl-1 text-[9px] text-[#222]">
          <p className="flex h-[17px] items-center">
            <Icon name="part" className="size-3.5" />
            <span className="ml-1">Деталь (Тел-0)</span>
          </p>
          <ul className="relative">
            <span className="absolute top-3 left-[7px] h-[117px] border-l border-dotted border-[#999]" />
            <span className="absolute top-3 left-[26px] h-[93px] border-l border-dotted border-[#999]" />
            <li className="flex h-4 items-center">
              <span className="relative ml-[3px] flex size-[9px] items-center justify-center border border-[#888] bg-white">
                <span className="h-px w-[5px] bg-black" />
              </span>
              <Icon name="origin" className="ml-1.5 size-3.5" />
              <span className="ml-1">(т)Начало координат</span>
            </li>
            <TreeLeaf icon="planeXY" label="Плоскость XY" />
            <TreeLeaf icon="planeZX" label="Плоскость ZX" />
            <TreeLeaf icon="planeZY" label="Плоскость ZY" />
            <TreeLeaf icon="axisX" label="Ось X" />
            <TreeLeaf icon="axisY" label="Ось Y" />
            <TreeLeaf icon="axisZ" label="Ось Z" />
            <li className="flex h-4 items-center">
              <span className="ml-2 w-2.5 border-t border-dotted border-[#999]" />
              <Icon name="sketchRed" className="size-3.5" />
              <span className="ml-1 bg-[#d4d0c8] px-0.5 leading-[14px]">(-) Эскиз:3</span>
            </li>
          </ul>
          <div className="mr-1 h-[3px] rounded-full border border-[#333] bg-[#888]" />
        </div>
        <div className="h-[135px] shrink-0 border-t-2 border-[#8c8c8c] bg-[#d4d0c8]" />
      </div>
      <div className="flex h-4 shrink-0 items-center border-t border-black text-[9px] text-[#23235c]">
        <button className="h-3.5 border border-[#9db0d8] bg-[#cfdff5] px-0.5 leading-3">Построение</button>
        <button className="ml-1 px-0.5">Исполнения</button>
        <button className="ml-1 px-0.5">Зоны</button>
      </div>
    </section>
  );
}

function Scene() {
  return (
    <svg viewBox="192 121 616 508" className="size-full" role="img" aria-label="Фантом выдавливания">
      <defs>
        <pattern id="mesh" width="3" height="3" patternUnits="userSpaceOnUse">
          <path d="M0 .5h3M.5 0v3" stroke="#32120c" strokeWidth=".5" />
        </pattern>
      </defs>
      <path d="M428 376V276a76 44 0 01152 0v100a76 44 0 01-152 0z" fill="url(#mesh)" />
      <path d="M504 282v62" stroke="#3a1d1d" />
      <g fill="none" strokeWidth="1">
        <path d="M449.500 281.500L504 313" stroke="#3f6fb4" />
        <path d="M504 313l108.500 62.500L504 438l-108.500-62.500L449.500 344" stroke="#5f8f3a" />
        <path d="M449.500 281.500V344" stroke="#4d88d0" />
        <path d="M449.500 344V469L558 406" stroke="#c07a68" />
        <path d="M449.500 344L558.500 281.500V406" stroke="#b06a68" />
        <path d="M504 438l54.500 31V406" stroke="#3a5f9c" />
        <path d="M504 377l21 11" stroke="#8a5a60" />
      </g>
      <ellipse cx="504" cy="375.500" rx="76.500" ry="44" fill="none" stroke="#e8c840" strokeWidth="1.800" />
      <path d="M500.500 374v-20l-4.500 5 8-15 7.500 8.500-4 1V374z" fill="#000" stroke="#fff" />
      <g fill="#fff">
        <path d="M447 241h6v6h-6zM501 270h6v6h-6zM444 339h7v7h-7zM449 342h7v7h-7zM501 375h6v6h-6z" />
      </g>
      <path d="M399.500 323V270l15-7.500v52z" fill="none" stroke="#1fa58c" />
      <text transform="translate(411 320) rotate(-90)" fill="#fff" fontSize="16" fontFamily="Liberation Sans, sans-serif">
        40±0,31
      </text>
      <text transform="translate(436 295) rotate(-90)" fill="#c01c24" fontSize="14" fontFamily="Liberation Sans, sans-serif">
        (v4,2)
      </text>
      {/* axis triad */}
      <path d="M250.500 570V542" stroke="#2a7a35" strokeWidth="2" />
      <path d="M250.500 532l3 12h-6z" fill="#2f9a3e" />
      <path d="M250 570l-26 14" stroke="#3d6cc0" strokeWidth="2" />
      <path d="M217 588l9-8 3 4z" fill="#4a8ad4" />
      <path d="M250 570l24 12" stroke="#a0262c" strokeWidth="2" />
      <path d="M284 587l-11-8-2 4z" fill="#d03a34" />
      <circle cx="250.500" cy="570.500" r="4" fill="#1c2c98" />
      <g fontSize="8" fontFamily="Liberation Sans, sans-serif">
        <text x="248" y="530" fill="#3c3f4c">Y</text>
        <text x="211" y="594" fill="#24349c">Z</text>
        <text x="285" y="594" fill="#7c1c20">X</text>
      </g>
    </svg>
  );
}

const directions = [
  { icon: "dirForward", label: "Прямое направление" },
  { icon: "dirBack", label: "Обратное направление", active: true },
  { icon: "dirBoth", label: "Два направления" },
  { icon: "dirMid", label: "Средняя плоскость" },
];

function DirectionMenu() {
  return (
    <div className="absolute bottom-full -left-px z-10 w-[123px] border border-[#666] bg-white py-px">
      {directions.map((d, i) => (
        <button
          key={d.label}
          className={clsx(
            "flex h-[18px] w-full items-center border text-left text-[9px] whitespace-nowrap text-[#222]",
            d.active && "border-[#3b4270] bg-[#b4b8cc]",
            i === 0 && "border-[#bbb] bg-[#f0efec]",
            i > 1 && "border-transparent"
          )}
        >
          <span className="flex h-4 w-5 shrink-0 items-center justify-center bg-white">
            <Icon name={d.icon} className="size-3.5" />
          </span>
          {d.label}
        </button>
      ))}
      <svg viewBox="0 0 12 18" className="absolute top-7 left-[25px] h-[18px] w-3" aria-hidden>
        <path d="M1 1v13l3-3 2.500 6 2.500-1-2.500-6H11z" fill="#fff" stroke="#777" />
      </svg>
    </div>
  );
}

function BoxTool({ icon, pressed }: { icon: string; pressed?: boolean }) {
  return (
    <button
      aria-label={icon}
      className={clsx(
        "flex h-4 w-4 shrink-0 items-center justify-center border",
        pressed ? "border-[#2c5aa8] bg-[#c4dcf8]" : "border-[#a09d94] bg-[#d4d0c8]"
      )}
    >
      <Icon name={icon} className="size-3.5" />
    </button>
  );
}

function Spinner({ id, label, value, width }: { id: string; label: ReactNode; value: string; width: string }) {
  return (
    <>
      <label htmlFor={id} className="mr-px shrink-0">
        {label}
      </label>
      <span className="flex h-4 shrink-0 border border-[#a09d94] bg-white">
        <input id={id} defaultValue={value} className={clsx("px-0.5 leading-3 outline-none", width)} />
        <span className="flex w-3 flex-col bg-[#d4d0c8]">
          <button aria-label="Больше" className="flex flex-1 items-center justify-center border-b border-[#a09d94]">
            <span className="rotate-180">
              <Caret />
            </span>
          </button>
          <button aria-label="Меньше" className="flex flex-1 items-center justify-center">
            <Caret />
          </button>
        </span>
      </span>
      <button className="h-4 w-3.5 shrink-0 border border-[#a09d94] text-[10px] leading-3 font-bold">±</button>
    </>
  );
}

const commandIcons = ["enter", "stop", "frame", "paramsBlue", "wand", "path", "remember", "help"];

const paramTabs = [
  { icon: "extrude", label: "Параметры", active: true },
  { icon: "thin", label: "Тонкая стенка" },
  { icon: "boolean", label: "Результат операции" },
  { icon: "props", label: "Свойства" },
];

function PropertyBar() {
  return (
    <div className="flex shrink-0 border-t border-white bg-[#c6c8d6] pt-1.5">
      <div className="mb-px ml-1 grid w-[75px] shrink-0 grid-cols-4 content-center bg-linear-to-br from-white via-[#e8e8f0] to-[#9c9db4] px-px">
        {commandIcons.map((i) => (
          <button key={i} aria-label={i} className="flex h-[17px] items-center justify-center">
            <Icon name={i} className="size-3.5" />
          </button>
        ))}
      </div>
      <div className="min-w-0 flex-1">
        <div className="flex h-7 items-center gap-0.5 border-b border-black bg-[#d6d3cb] pl-3.5 text-[9px] text-[#222]">
          <BoxTool icon="objTree" pressed />
          <BoxTool icon="chain" />
          <BoxTool icon="cylinder" />
          <Sep width="w-1" />
          <BoxTool icon="face" pressed />
          <input aria-label="Сечение" readOnly value="(-) Эскиз:3" className="h-4 w-[77px] shrink-0 border border-[#a09d94] px-0.5 outline-none" />
          <BoxTool icon="line" />
          <input aria-label="Направляющий объект" readOnly value="(-) Эскиз:3" className="h-4 w-[77px] shrink-0 border border-[#a09d94] px-0.5 outline-none" />
          <Sep width="w-1" />
          <div className="relative flex h-[18px] w-[34px] shrink-0 border border-[#3b4270]">
            <button aria-label="Направление" className="flex w-5 items-center justify-center bg-white">
              <Icon name="dirForward" className="size-3.5" />
            </button>
            <button aria-label="Выбор направления" className="flex flex-1 items-center justify-center bg-[#7c84ac]">
              <Caret />
            </button>
            <DirectionMenu />
          </div>
          <Sep width="w-1" />
          <div className="flex h-4 w-[34px] shrink-0 border border-[#a09d94]">
            <button aria-label="Способ" className="flex w-5 items-center justify-center bg-white">
              <Icon name="distance" className="size-3.5" />
            </button>
            <button aria-label="Выбор способа" className="flex flex-1 items-center justify-center">
              <Caret />
            </button>
          </div>
          <Spinner id="distance" label={<Mnemonic text="Расстояние 1" at={11} />} value="40.0" width="w-[26px]" />
          <BoxTool icon="slopeA" pressed />
          <BoxTool icon="slopeB" />
          <Spinner id="angle" label={<Mnemonic text="Угол 1" />} value="0.0" width="w-[38px]" />
        </div>
        <div className="flex h-5 items-center gap-1 pl-0.5 text-[9px] text-[#23235c]">
          {paramTabs.map((t) => (
            <button
              key={t.label}
              className={clsx(
                "flex h-4 items-center border px-px whitespace-nowrap",
                t.active ? "border-[#9db0d8] bg-[#cfdff5]" : "border-transparent"
              )}
            >
              <Icon name={t.icon} className="size-3.5" />
              {t.label}
            </button>
          ))}
        </div>
      </div>
    </div>
  );
}

function VmStatus() {
  return (
    <footer className="flex h-[18px] shrink-0 items-center border-t-2 border-white bg-[#d4d0c8] text-[9px] text-[#222]">
      <span>To return to your computer, move the mouse pointer outside or press Ctrl+Alt.</span>
      <div className="mr-1.5 ml-auto flex items-center gap-[3px]">
        {["disc", "drive", "floppy", "network", "sound", "usb"].map((i) => (
          <Icon key={i} name={i} className="size-3.5" />
        ))}
        <span className="mx-0.5 h-3.5 w-0.5 border-l border-[#9c9a94] bg-white" />
        <Icon name="log" className="size-3.5" />
      </div>
    </footer>
  );
}

// dithered strip of the desktop behind the window
function Dither() {
  return (
    <svg className="h-full w-1.5 shrink-0 bg-black" aria-hidden>
      <defs>
        <pattern id="dither" width="4" height="12" patternUnits="userSpaceOnUse">
          <path d="M0 0h1v1H0zM2 2h1v1H2zM2 10h1v1H2z" fill="#b8c8b8" />
          <path d="M2 6h1v1H2zM0 8h1v1H0z" fill="#c06a8c" />
          <path d="M0 4h1v1H0z" fill="#6a90c0" />
        </pattern>
      </defs>
      <rect width="100%" height="100%" fill="url(#dither)" />
    </svg>
  );
}

export default function App() {
  return (
    <div className="flex h-screen overflow-hidden bg-[#d9d6cf] font-['DejaVu_Sans_Condensed','DejaVu_Sans',sans-serif]">
      <div className="flex min-w-0 flex-1 flex-col pl-1">
        <VmTitleBar />
        <VmToolbar />
        <VmTabs />
        <div className="flex min-h-0 flex-1 flex-col border-l border-[#444]">
          <KompasHeader />
          <div className="flex min-h-0 flex-1 border-t border-black">
            <LeftStrip />
            <div className="flex min-w-0 flex-1 flex-col border-l border-[#8c8da0]">
              <div className="flex min-h-0 flex-1">
                <ModelTree />
                <div className="w-1 shrink-0 border-r border-[#777] bg-[#c6c8d6]" />
                <main className="min-w-0 flex-1 bg-black">
                  <Scene />
                </main>
              </div>
              <PropertyBar />
            </div>
          </div>
          <div className="flex h-[17px] shrink-0 items-center border-t border-[#8c8da0] bg-linear-to-b from-[#b9c3da] to-[#e3e8f2] pl-1 text-[9px] text-[#23235c]">
            <span>Выберите направление построения</span>
            <span className="mr-[60px] ml-auto h-3 w-0.5 border-l border-[#8c8da0] bg-white" />
          </div>
        </div>
        <VmStatus />
      </div>
      <Dither />
    </div>
  );
}
